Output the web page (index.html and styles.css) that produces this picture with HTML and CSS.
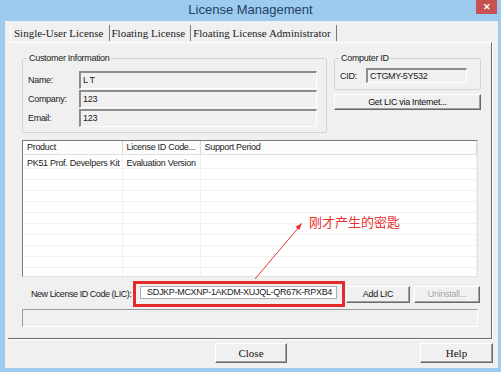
FILE: index.html
```html
<!DOCTYPE html>
<html lang="en">
<head>
    <meta charset="UTF-8">
    <title>License Management</title>
    <link rel="stylesheet" href="styles.css">
</head>
<body>
    <div class="window">
        <div class="titlebar">
            <span class="title">License Management</span>
            <span class="close-x">&#x2715;</span>
        </div>
        <div class="client">
            <div class="tabs">
                <span class="tab active">Single-User License</span>
                <span class="tab">Floating License</span>
                <span class="tab">Floating License Administrator</span>
            </div>
            <div class="panel">
                <div class="top-row">
                    <fieldset class="group customer">
                        <legend>Customer Information</legend>
                        <div class="fields">
                            <label>Name:</label>
                            <div class="field">L T</div>
                            <label>Company:</label>
                            <div class="field">123</div>
                            <label>Email:</label>
                            <div class="field">123</div>
                        </div>
                    </fieldset>
                    <div class="side">
                        <fieldset class="group computer">
                            <legend>Computer ID</legend>
                            <div class="cid-row">
                                <label>CID:</label>
                                <div class="field cid">CTGMY-5Y532</div>
                            </div>
                        </fieldset>
                        <button class="btn get-lic">Get LIC via Internet...</button>
                    </div>
                </div>

                <div class="list">
                    <table>
                        <colgroup>
                            <col class="col-product">
                            <col class="col-code">
                            <col>
                        </colgroup>
                        <thead>
                            <tr><th>Product</th><th>License ID Code...</th><th>Support Period</th></tr>
                        </thead>
                        <tbody>
                            <tr class="first"><td>PK51 Prof. Develpers Kit</td><td>Evaluation Version</td><td></td></tr>
                            <tr><td></td><td></td><td></td></tr>
                            <tr><td></td><td></td><td></td></tr>
                            <tr><td></td><td></td><td></td></tr>
                            <tr><td></td><td></td><td></td></tr>
                            <tr><td></td><td></td><td></td></tr>
                            <tr><td></td><td></td><td></td></tr>
                            <tr><td></td><td></td><td></td></tr>
                            <tr><td></td><td></td><td></td></tr>
                            <tr><td></td><td></td><td></td></tr>
                            <tr><td></td><td></td><td></td></tr>
                        </tbody>
                    </table>
                </div>

                <div class="lic-row">
                    <label class="lic-label">New License ID Code (LIC):</label>
                    <div class="highlight">
                        <div class="lic-input">SDJKP-MCXNP-1AKDM-XUJQL-QR67K-RPXB4</div>
                    </div>
                    <button class="btn add-lic">Add LIC</button>
                    <button class="btn uninstall" disabled>Uninstall...</button>
                </div>

                <div class="progress"></div>
            </div>
            <div class="footer">
                <button class="btn big close">Close</button>
                <button class="btn big help">Help</button>
            </div>
        </div>

        <svg class="arrow" width="60" height="70" viewBox="0 0 60 70">
            <line x1="5" y1="64" x2="49" y2="12" stroke="#e8322f" stroke-width="1"/>
            <polygon points="52,8 49.4,15 45.6,11.8" fill="#e8322f"/>
        </svg>
        <div class="note">刚才产生的密匙</div>
    </div>
</body>
</html>
```

FILE: styles.css
```css
body {
    margin: 0;
    background: #fff;
}

* {
    box-sizing: border-box;
}

.window {
    position: relative;
    width: 501px;
    height: 372px;
    overflow: hidden;
    background: #9dcbf0;
    font-family: "Liberation Sans", Arial, sans-serif;
    font-size: 9px;
    letter-spacing: -0.3px;
    color: #1a1a1a;
}

.titlebar {
    display: flex;
    align-items: flex-start;
    height: 21px;
}

.title {
    flex: 1;
    padding-left: 25px;
    text-align: center;
    font-size: 13px;
    letter-spacing: 0;
    line-height: 20px;
    color: #24405e;
}

.close-x {
    display: flex;
    align-items: center;
    justify-content: center;
    width: 21px;
    height: 14px;
    margin-right: 4px;
    background: #c75050;
    color: #fff;
    font-size: 9px;
    font-weight: bold;
}

.client {
    margin: 0 3px 0 5px;
    height: 347px;
    background: #f0f0f0;
}

/* tab strip */
.tabs {
    display: flex;
    height: 21px;
    padding: 4px 0 0 5px;
    font-family: "Liberation Serif", serif;
    font-size: 11px;
    letter-spacing: 0;
    color: #222;
}

.tab {
    height: 16px;
    line-height: 16px;
    padding: 0 5px 0 2px;
    border-right: 1px solid #7a7a7a;
}

.tab.active {
    padding-left: 3px;
    border-left: 1px solid #fff;
}

.panel {
    width: 484px;
    height: 297px;
    margin-left: 3px;
    padding: 10px 0 0 14px;
    border-top: 1px solid #fff;
    border-right: 1px solid #696969;
    border-bottom: 1px solid #696969;
    box-shadow: 1px 1px 0 #fff;
}

.top-row {
    display: flex;
    align-items: flex-start;
    gap: 7px;
}

.group {
    margin: 0;
    min-width: 0;
    border: 1px solid #d3d3d3;
    border-radius: 2px;
}

.group legend {
    padding: 0 1px;
    line-height: 11px;
}

.customer {
    width: 305px;
    padding: 7px 5px 5px;
}

.fields {
    display: grid;
    grid-template-columns: 51px 238px;
    grid-auto-rows: 18px;
    row-gap: 1px;
    align-items: center;
}

.field {
    height: 100%;
    padding-left: 2px;
    line-height: 14px;
    background: #f0f0f0;
    border-top: 2px solid #8c8c8c;
    border-left: 2px solid #8c8c8c;
    border-right: 1px solid #fff;
    border-bottom: 1px solid #fff;
}

.side {
    width: 147px;
}

.computer {
    width: 147px;
    padding: 4px 5px 6px;
}

.cid-row {
    display: flex;
    align-items: center;
    height: 15px;
}

.cid-row label {
    width: 26px;
}

.field.cid {
    width: 101px;
    height: 15px;
    line-height: 12px;
}

.btn {
    font-family: inherit;
    font-size: 9px;
    letter-spacing: -0.3px;
    color: #111;
    background: #f0f0f0;
    border: 1px solid;
    border-color: #fff #696969 #696969 #fff;
    box-shadow: inset -1px -1px #a0a0a0;
    padding: 0;
}

.get-lic {
    display: block;
    width: 147px;
    height: 16px;
    margin-top: 4px;
}

/* list view */
.list {
    width: 456px;
    height: 137px;
    margin-top: 7px;
    overflow: hidden;
    background: #fff;
    border: 1px solid;
    border-color: #7a7a7a #e3e3e3 #e3e3e3 #7a7a7a;
}

.list table {
    width: 100%;
    table-layout: fixed;
    border-collapse: collapse;
}

.col-product {
    width: 99px;
}

.col-code {
    width: 78px;
}

.list th {
    height: 13px;
    padding: 0 4px;
    font-weight: normal;
    text-align: left;
    white-space: nowrap;
    overflow: hidden;
    background: #fcfcfc;
    border-right: 1px solid #d8d8d8;
    border-bottom: 1px solid #e0e0e0;
}

.list td {
    height: 11px;
    padding: 0 4px;
    line-height: 10px;
    white-space: nowrap;
    overflow: hidden;
    border-right: 1px solid #f1f1f1;
    border-bottom: 1px solid #f1f1f1;
}

.list tr.first td {
    height: 13px;
    padding-top: 3px;
}

/* LIC entry */
.lic-row {
    display: flex;
    align-items: center;
    height: 26px;
    margin-top: 4px;
    padding-left: 9px;
}

.lic-label {
    width: 102px;
    flex-shrink: 0;
    white-space: nowrap;
    letter-spacing: -0.45px;
}

.highlight {
    width: 212px;
    height: 26px;
    padding: 2px 5px 5px 4px;
    border: 3px solid #e42b2b;
}

.lic-input {
    height: 13px;
    padding-left: 6px;
    line-height: 11px;
    background: #fff;
    border: 1px solid #abadb3;
}

.add-lic {
    width: 64px;
    height: 17px;
    margin-left: 1px;
}

.uninstall {
    width: 66px;
    height: 17px;
    margin-left: 4px;
    color: #a3a3a3;
    text-shadow: 1px 1px 0 #fff;
}

.progress {
    width: 456px;
    height: 18px;
    margin-top: 2px;
    border-top: 1px solid #9a9a9a;
    border-left: 1px solid #9a9a9a;
    border-right: 1px solid #fff;
    border-bottom: 1px solid #fff;
}

.footer {
    display: flex;
    padding-top: 4px;
}

.btn.big {
    height: 20px;
    font-family: "Liberation Serif", serif;
    font-size: 11px;
    letter-spacing: 0;
}

.close {
    width: 72px;
    margin-left: 210px;
}

.help {
    width: 73px;
    margin-left: 133px;
}

/* annotation drawn over the screenshot */
.arrow {
    position: absolute;
    left: 250px;
    top: 215px;
}

.note {
    position: absolute;
    left: 309px;
    top: 213px;
    font-family: "Noto Sans CJK SC", sans-serif;
    font-size: 13px;
    letter-spacing: 0;
    line-height: 18px;
    color: #e8322f;
}
```
